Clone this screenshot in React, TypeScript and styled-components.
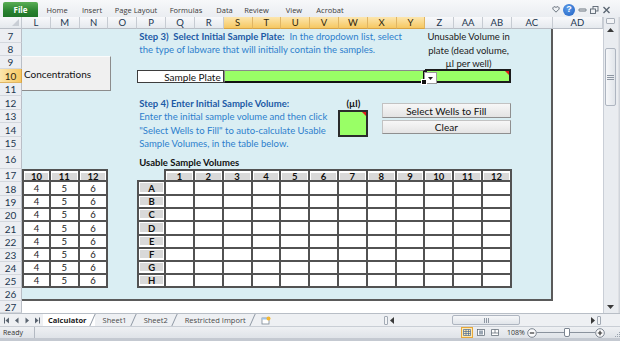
/* eslint-disable */
import React from 'react'
import styled, { createGlobalStyle } from 'styled-components'

const GlobalStyle = createGlobalStyle`
  html, body { margin: 0; padding: 0; }
  body { background: #fff; font-family: 'Lato', 'Liberation Sans', sans-serif; }
`

// spreadsheet geometry
const COLS = ['L', 'M', 'N', 'O', 'P', 'Q', 'R', 'S', 'T', 'U', 'V', 'W', 'X', 'Y', 'Z', 'AA', 'AB', 'AC', 'AD']
const HILITE_COLS = ['S', 'T', 'U', 'V', 'W', 'X', 'Y']
const ROWS: [number, number][] = [
  [7, 14], [8, 13], [9, 13], [10, 14], [11, 13], [12, 14], [13, 13], [14, 14], [15, 13], [16, 19],
  [17, 13], [18, 14], [19, 13], [20, 13], [21, 14], [22, 13], [23, 13], [24, 13], [25, 13], [26, 13], [27, 12],
]
const col = (c: string) => COLS.indexOf(c) + 2
const row = (r: number) => r - 5

const RIBBON_TABS: [string, number][] = [
  ['Home', 38], ['Insert', 32], ['Page Layout', 56], ['Formulas', 44],
  ['Data', 33], ['Review', 31], ['View', 44], ['Acrobat', 28],
]
const WELL_ROWS = ['A', 'B', 'C', 'D', 'E', 'F', 'G', 'H']
const WELL_COLS = Array.from({ length: 12 }, (_, i) => String(i + 1))

const Window = styled.div`
  width: 620px;
  height: 341px;
  overflow: hidden;
  display: flex;
  flex-direction: column;
  background: #d3d8df;
`

/* ---------- ribbon ---------- */
const Ribbon = styled.div`
  height: 17px;
  display: flex;
  align-items: flex-end;
  background: linear-gradient(#f7f8fa, #eaedf1);
  font-family: 'Open Sans', 'Liberation Sans', sans-serif;
`

const FileTab = styled.div`
  margin-left: 3px;
  width: 35px;
  height: 15px;
  display: flex;
  align-items: center;
  justify-content: center;
  border-radius: 2px 2px 0 0;
  background: linear-gradient(#5aae55, #2a8230 60%, #1f7428);
  color: #fff;
  font-size: 8px;
  font-weight: 700;
`

const RibbonTab = styled.div<{ $w: number }>`
  width: ${p => p.$w}px;
  height: 15px;
  display: flex;
  align-items: center;
  justify-content: center;
  font-size: 7.5px;
  color: #3b3b3b;
  white-space: nowrap;
`

const WindowIcons = styled.div`
  margin-left: auto;
  margin-right: 9px;
  height: 15px;
  display: flex;
  align-items: center;
  gap: 3px;
`

const HelpIcon = styled.div`
  width: 12px;
  height: 12px;
  border-radius: 50%;
  background: radial-gradient(circle at 40% 35%, #5b9ae8, #1d5fc2);
  color: #fff;
  font-size: 9px;
  font-weight: 700;
  display: flex;
  align-items: center;
  justify-content: center;
  line-height: 1;
  font-family: 'Liberation Sans', sans-serif;
`

/* ---------- sheet ---------- */
const Main = styled.div`
  display: flex;
  height: 296px;
`

const Sheet = styled.div`
  width: 603px;
  display: grid;
  grid-template-columns: 22px repeat(17, 28.8235px) 41px 50px;
  grid-template-rows: 12px ${ROWS.map(([, h]) => h + 'px').join(' ')};
  background: #fff;
  overflow: hidden;
`

const Corner = styled.div`
  grid-column: 1;
  grid-row: 1;
  position: relative;
  background: linear-gradient(#f7f8fa, #e4e8ed);
  border-right: 1px solid #c3c8cf;
  border-bottom: 1px solid #b9bec6;
  &::after {
    content: '';
    position: absolute;
    right: 2px;
    bottom: 2px;
    border-bottom: 7px solid #c9ced5;
    border-left: 7px solid transparent;
  }
`

const ColHeader = styled.div<{ $sel?: boolean }>`
  grid-row: 1;
  display: flex;
  align-items: center;
  justify-content: center;
  font-size: 9.5px;
  color: ${p => (p.$sel ? '#30260c' : '#22364f')};
  border-right: 1px solid ${p => (p.$sel ? '#e0b563' : '#c6cbd2')};
  border-bottom: 1px solid ${p => (p.$sel ? '#d9a446' : '#b9bec6')};
  background: ${p => (p.$sel ? 'linear-gradient(#fce6ae, #f6c862)' : 'linear-gradient(#f8f9fb, #e5e9ee)')};
`

const RowHeader = styled.div<{ $r: number; $sel?: boolean }>`
  grid-column: 1;
  grid-row: ${p => row(p.$r)};
  display: flex;
  align-items: center;
  justify-content: center;
  font-size: 10px;
  color: ${p => (p.$sel ? '#30260c' : '#22364f')};
  border-right: 1px solid ${p => (p.$sel ? '#d9a446' : '#b9bec6')};
  border-bottom: 1px solid ${p => (p.$sel ? '#e0b563' : '#d3d7dd')};
  background: ${p => (p.$sel ? 'linear-gradient(90deg, #fce6ae, #f6c862)' : '#eceef2')};
`

const BlueFill = styled.div`
  grid-column: ${col('L')} / ${col('AD')};
  grid-row: ${row(7)} / ${row(27)};
  background: #daeef3;
  border-right: 2px solid #5a5a5a;
  border-bottom: 2px solid #5a5a5a;
`

const Instruction = styled.div<{ $r: number }>`
  grid-column: ${col('P')} / ${col('Z')};
  grid-row: ${p => row(p.$r)};
  padding-left: 2px;
  display: flex;
  align-items: center;
  white-space: nowrap;
  font-size: 9.5px;
  color: #2d7fcd;
  b {
    color: #1c5aa6;
    font-weight: 700;
  }
`

const DeadVolumeNote = styled.div`
  grid-column: ${col('Z')} / ${col('AC')};
  grid-row: ${row(7)} / ${row(10)};
  padding-top: 1px;
  text-align: center;
  font-size: 9.5px;
  line-height: 13.5px;
  color: #1a1a1a;
`

const ConcButton = styled.div`
  grid-column: ${col('L')} / ${col('P')};
  grid-row: ${row(9)} / ${row(12)};
  align-self: start;
  width: 89px;
  height: 35px;
  box-sizing: border-box;
  display: flex;
  align-items: center;
  padding-left: 2px;
  background: #f0f0f0;
  border-right: 1px solid #8c8c8c;
  border-bottom: 1px solid #8c8c8c;
  border-top: 1px solid #fbfbfb;
  font-size: 10px;
  color: #111;
`

const PlateLabel = styled.div`
  grid-column: ${col('P')} / ${col('S')};
  grid-row: ${row(10)};
  margin-top: 1px;
  box-sizing: border-box;
  background: #fff;
  border: 1px solid #3d3d3d;
  display: flex;
  align-items: center;
  justify-content: flex-end;
  padding-right: 2px;
  font-size: 10px;
  color: #111;
`

const PlateSelect = styled.div`
  grid-column: ${col('S')} / ${col('Z')};
  grid-row: ${row(10)};
  position: relative;
  margin-top: 1px;
  background: #99ff66;
  border: 1px solid #8a8a8a;
  border-right: 2px solid #111;
  border-bottom: 2px solid #111;
  &::after {
    content: '';
    position: absolute;
    right: -4px;
    bottom: -4px;
    width: 4px;
    height: 4px;
    background: #111;
    border: 1px solid #fff;
    z-index: 2;
  }
`

const DropArrow = styled.div`
  position: absolute;
  right: -14px;
  top: 1px;
  width: 11px;
  height: 10px;
  background: #fff;
  border: 1px solid #9a9a9a;
  display: flex;
  align-items: center;
  justify-content: center;
  z-index: 1;
`

const DeadVolumeInput = styled.div`
  grid-column: ${col('Z')} / ${col('AC')};
  grid-row: ${row(10)};
  position: relative;
  margin-right: 1px;
  background: #99ff66;
  border: 2px solid #1b1b1b;
  &::after {
    content: '';
    position: absolute;
    top: 0;
    right: 0;
    border-top: 4px solid #e21b1b;
    border-left: 4px solid transparent;
  }
`

const UlLabel = styled.div`
  grid-column: ${col('W')};
  grid-row: ${row(12)};
  display: flex;
  align-items: center;
  justify-content: center;
  font-size: 9.5px;
  font-weight: 700;
  color: #111;
`

const VolumeInput = styled.div`
  grid-column: ${col('W')};
  grid-row: ${row(13)} / ${row(15)};
  position: relative;
  background: #99ff66;
  border: 2px solid #2b2b2b;
  margin: 0 0 0 -1px;
  &::after {
    content: '';
    position: absolute;
    top: 0;
    right: 0;
    border-top: 4px solid #e21b1b;
    border-left: 4px solid transparent;
  }
`

const ButtonStack = styled.div`
  grid-column: ${col('X')} / ${col('AC')};
  grid-row: ${row(12)} / ${row(15)};
  display: flex;
  flex-direction: column;
  align-items: flex-end;
  gap: 2px;
  padding: 7px 1px 0 0;
`

const FormButton = styled.div<{ $h: number }>`
  width: 129px;
  height: ${p => p.$h}px;
  box-sizing: border-box;
  display: flex;
  align-items: center;
  justify-content: center;
  background: linear-gradient(#f7f7f7, #e4e4e4);
  border: 1px solid #c2c2c2;
  border-right-color: #8f8f8f;
  border-bottom-color: #8f8f8f;
  font-size: 10px;
  color: #111;
`

const TableTitle = styled.div`
  grid-column: ${col('P')} / ${col('V')};
  grid-row: ${row(16)};
  padding-left: 2px;
  display: flex;
  align-items: flex-end;
  white-space: nowrap;
  font-size: 9.5px;
  font-weight: 700;
  line-height: 13px;
  color: #111;
`

const LeftTable = styled.div`
  grid-column: ${col('L')} / ${col('O')};
  grid-row: ${row(17)} / ${row(26)};
  display: grid;
  grid-template-columns: subgrid;
  grid-template-rows: subgrid;
  & > :nth-child(-n + 3) {
    border-top: 2px solid #525252;
  }
  & > :nth-child(3n + 1) {
    border-left: 2px solid #525252;
  }
`

const WellTable = styled.div`
  grid-column: ${col('P')} / ${col('AC')};
  grid-row: ${row(17)} / ${row(26)};
  display: grid;
  grid-template-columns: subgrid;
  grid-template-rows: subgrid;
  & > :nth-child(-n + 13) {
    border-top: 2px solid #525252;
  }
  & > :nth-child(13n + 1) {
    border-left: 2px solid #525252;
  }
  & > :first-child {
    border-top: none;
    border-left: none;
    background: transparent;
  }
`

const Cell = styled.div`
  display: flex;
  align-items: center;
  justify-content: center;
  background: #fff;
  border-right: 2px solid #525252;
  border-bottom: 2px solid #525252;
  font-size: 9.5px;
  color: #1a1a1a;
`

const HeadCell = styled(Cell)`
  background: #d9d9d9;
  box-shadow: inset 0 2px 0 #fff, inset 1px 0 0 #fff, inset -1px 0 0 #fff;
  font-weight: 700;
  color: #111;
  padding-top: 1px;
`

const LabelCell = styled(Cell)`
  background: #d9d9d9;
  box-shadow: inset 0 0 0 1px #fff, inset 0 -2px 0 #fff;
  font-weight: 700;
  color: #111;
`

/* ---------- scrollbars ---------- */
const VScroll = styled.div`
  width: 14px;
  display: flex;
  flex-direction: column;
  background: #e9ecf0;
  border-left: 1px solid #c9ced6;
  box-sizing: border-box;
`

const SplitBox = styled.div`
  height: 4px;
  margin: 1px 2px 0;
  border: 1px solid #a9b0ba;
  border-radius: 1px;
  background: #f3f4f6;
`

const ScrollArrow = styled.div`
  height: 12px;
  display: flex;
  align-items: center;
  justify-content: center;
`

const Track = styled.div`
  flex: 1;
`

const VThumb = styled.div`
  margin: 12px 1px 0;
  height: 56px;
  border: 1px solid #aeb5c0;
  border-radius: 2px;
  background: linear-gradient(90deg, #f6f7f9, #e1e5ea);
  display: flex;
  align-items: center;
  justify-content: center;
`

const FrameEdge = styled.div`
  flex: 1;
  background: linear-gradient(90deg, #f1f2f4, #c9ced5);
`

/* ---------- sheet tabs row ---------- */
const TabsRow = styled.div`
  height: 13px;
  display: flex;
  align-items: stretch;
  background: #eef0f3;
  border-top: 1px solid #b8bec6;
  box-sizing: border-box;
  font-family: 'Open Sans', 'Liberation Sans', sans-serif;
`

const TabNav = styled.div`
  width: 40px;
  padding-left: 3px;
  display: flex;
  align-items: center;
  gap: 2px;
`

const SheetTab = styled.div<{ $active?: boolean }>`
  position: relative;
  padding: 0 ${p => (p.$active ? 8 : 9)}px 0 ${p => (p.$active ? 5 : 8)}px;
  display: flex;
  align-items: center;
  font-size: 7.5px;
  font-weight: ${p => (p.$active ? 700 : 400)};
  color: ${p => (p.$active ? '#1a1a1a' : '#4a4a4a')};
  background: ${p => (p.$active ? '#fff' : 'transparent')};
  white-space: nowrap;
  &::after {
    content: '';
    position: absolute;
    right: 2px;
    top: 0;
    bottom: 0;
    width: 1px;
    background: #8f98a4;
    transform: skewX(-24deg);
  }
`

const NewSheet = styled.div`
  width: 22px;
  display: flex;
  align-items: center;
  justify-content: center;
`

const HScroll = styled.div`
  margin-left: auto;
  width: 236px;
  display: flex;
  align-items: center;
  gap: 2px;
`

const HThumb = styled.div`
  margin-left: 56px;
  width: 66px;
  height: 8px;
  border: 1px solid #aeb5c0;
  border-radius: 2px;
  background: linear-gradient(#f6f7f9, #e1e5ea);
  display: flex;
  align-items: center;
  justify-content: center;
`

const HTrack = styled.div`
  flex: 1;
  display: flex;
  align-items: center;
`

const ScrollEnd = styled.div`
  width: 17px;
`

/* ---------- status bar ---------- */
const StatusBar = styled.div`
  height: 12px;
  display: flex;
  align-items: center;
  background: linear-gradient(#eef0f3, #dfe3e8);
  border-top: 1px solid #c9ced5;
  box-sizing: border-box;
  font-family: 'Open Sans', 'Liberation Sans', sans-serif;
  font-size: 7px;
  color: #333;
`

const ReadyBox = styled.div`
  width: 31px;
  height: 100%;
  padding-left: 3px;
  display: flex;
  align-items: center;
  border-right: 1px solid #b3b9c2;
`

const ViewButtons = styled.div`
  margin-left: auto;
  display: flex;
  align-items: center;
  gap: 2px;
`

const ViewButton = styled.div<{ $on?: boolean }>`
  width: 10px;
  height: 9px;
  display: flex;
  align-items: center;
  justify-content: center;
  border: 1px solid ${p => (p.$on ? '#e7a83a' : 'transparent')};
  background: ${p => (p.$on ? '#fde9b4' : 'transparent')};
`

const ZoomPct = styled.div`
  margin-left: 6px;
  width: 20px;
`

const ZoomSlider = styled.div`
  display: flex;
  align-items: center;
  margin-right: 3px;
`

const SliderTrack = styled.div`
  position: relative;
  width: 58px;
  height: 1px;
  background: #8a929d;
`

const SliderThumb = styled.div`
  position: absolute;
  left: 27px;
  top: -4px;
  width: 4px;
  height: 7px;
  background: #fff;
  border: 1px solid #7c8591;
  border-radius: 1px 1px 2px 2px;
`

const Grip = styled.div`
  width: 12px;
  height: 100%;
  display: flex;
  align-items: flex-end;
  justify-content: flex-end;
`

const BottomFrame = styled.div`
  height: 3px;
  background: #c4c9d1;
`

/* ---------- small drawn icons ---------- */
const Tri = ({ dir }: { dir: 'up' | 'down' | 'left' | 'right' }) => {
  const pts = {
    up: '0,4 3.5,0 7,4',
    down: '0,0 3.5,4 7,0',
    left: '4,0 0,3.5 4,7',
    right: '0,0 4,3.5 0,7',
  }[dir]
  const vertical = dir === 'up' || dir === 'down'
  return (
    <svg width={vertical ? 7 : 4} height={vertical ? 4 : 7} viewBox={vertical ? '0 0 7 4' : '0 0 4 7'}>
      <polygon points={pts} fill="#3a3a3a" />
    </svg>
  )
}

const NavIcon = ({ kind }: { kind: 'first' | 'prev' | 'next' | 'last' }) => (
  <svg width="8" height="7" viewBox="0 0 8 7">
    {kind === 'first' && <><rect x="1" y="0.5" width="1" height="6" fill="#5a6470" /><polygon points="6,0.5 2.5,3.5 6,6.5" fill="#5a6470" /></>}
    {kind === 'prev' && <polygon points="5.5,0.5 2,3.5 5.5,6.5" fill="#5a6470" />}
    {kind === 'next' && <polygon points="2.5,0.5 6,3.5 2.5,6.5" fill="#5a6470" />}
    {kind === 'last' && <><polygon points="2,0.5 5.5,3.5 2,6.5" fill="#5a6470" /><rect x="6" y="0.5" width="1" height="6" fill="#5a6470" /></>}
  </svg>
)

function GripLines({ vertical }: { vertical?: boolean }) {
  return vertical ? (
    <svg width="7" height="5" viewBox="0 0 7 5">
      <path d="M0 0.5H7M0 2.5H7M0 4.5H7" stroke="#8d96a2" strokeWidth="1" />
    </svg>
  ) : (
    <svg width="5" height="5" viewBox="0 0 5 5">
      <path d="M0.5 0V5M2.5 0V5M4.5 0V5" stroke="#8d96a2" strokeWidth="1" />
    </svg>
  )
}

function CircleBtn({ plus }: { plus?: boolean }) {
  return (
    <svg width="10" height="10" viewBox="0 0 10 10">
      <circle cx="5" cy="5" r="4.3" fill="#fbfbfc" stroke="#6f7884" strokeWidth="0.9" />
      <path d={plus ? 'M2.8 5H7.2M5 2.8V7.2' : 'M2.8 5H7.2'} stroke="#333" strokeWidth="1.2" />
    </svg>
  )
}

export default function App() {
  return (
    <>
      <GlobalStyle />
      <Window>
        <Ribbon>
          <FileTab>File</FileTab>
          {RIBBON_TABS.map(([label, w]) => (
            <RibbonTab key={label} $w={w}>{label}</RibbonTab>
          ))}
          <WindowIcons>
            <svg width="8" height="7" viewBox="0 0 8 7">
              <path d="M4 6.2 L1 3.2 A1.5 1.5 0 0 1 4 1.6 A1.5 1.5 0 0 1 7 3.2 Z" fill="none" stroke="#5b6672" strokeWidth="0.9" />
            </svg>
            <HelpIcon>?</HelpIcon>
            <svg width="9" height="8" viewBox="0 0 9 8">
              <rect x="1" y="3" width="7" height="2" rx="0.5" fill="none" stroke="#5b6672" strokeWidth="0.9" />
            </svg>
            <svg width="9" height="8" viewBox="0 0 9 8">
              <rect x="3" y="0.5" width="5" height="4.5" fill="none" stroke="#5b6672" strokeWidth="0.9" />
              <rect x="0.5" y="3" width="5" height="4.5" fill="#eef0f3" stroke="#5b6672" strokeWidth="0.9" />
            </svg>
            <svg width="9" height="8" viewBox="0 0 9 8">
              <path d="M1.5 1 L7.5 7 M7.5 1 L1.5 7" stroke="#5b6672" strokeWidth="1.4" />
            </svg>
          </WindowIcons>
        </Ribbon>

        <Main>
          <Sheet>
            <Corner />
            {COLS.map(c => (
              <ColHeader key={c} $sel={HILITE_COLS.includes(c)}>{c}</ColHeader>
            ))}
            {ROWS.map(([r]) => (
              <RowHeader key={r} $r={r} $sel={r === 10}>{r}</RowHeader>
            ))}

            <BlueFill />

            <Instruction $r={7}>
              <b>Step 3)&nbsp; Select Initial Sample Plate:</b>&nbsp; In the dropdown list, select
            </Instruction>
            <Instruction $r={8}>the type of labware that will initially contain the samples.</Instruction>

            <DeadVolumeNote>
              Unusable Volume in<br />
              plate (dead volume,<br />
              µl per well)
            </DeadVolumeNote>

            <ConcButton>Concentrations</ConcButton>

            <PlateLabel>Sample Plate</PlateLabel>
            <DeadVolumeInput />
            <PlateSelect>
              <DropArrow>
                <svg width="5" height="3" viewBox="0 0 5 3"><polygon points="0,0 5,0 2.5,3" fill="#222" /></svg>
              </DropArrow>
            </PlateSelect>

            <Instruction $r={12}><b>Step 4) Enter Initial Sample Volume:</b></Instruction>
            <Instruction $r={13}>Enter the initial sample volume and then click</Instruction>
            <Instruction $r={14}>"Select Wells to Fill" to auto-calculate Usable</Instruction>
            <Instruction $r={15}>Sample Volumes, in the table below.</Instruction>

            <UlLabel>(µl)</UlLabel>
            <VolumeInput />

            <ButtonStack>
              <FormButton $h={15}>Select Wells to Fill</FormButton>
              <FormButton $h={14}>Clear</FormButton>
            </ButtonStack>

            <TableTitle>Usable Sample Volumes</TableTitle>

            <LeftTable>
              {['10', '11', '12'].map(h => <HeadCell key={h}>{h}</HeadCell>)}
              {WELL_ROWS.map(r => (
                <React.Fragment key={r}>
                  <Cell>4</Cell>
                  <Cell>5</Cell>
                  <Cell>6</Cell>
                </React.Fragment>
              ))}
            </LeftTable>

            <WellTable>
              <Cell />
              {WELL_COLS.map(h => <HeadCell key={h}>{h}</HeadCell>)}
              {WELL_ROWS.map(r => (
                <React.Fragment key={r}>
                  <LabelCell>{r}</LabelCell>
                  {WELL_COLS.map(c => <Cell key={c} />)}
                </React.Fragment>
              ))}
            </WellTable>
          </Sheet>

          <VScroll>
            <SplitBox />
            <ScrollArrow><Tri dir="up" /></ScrollArrow>
            <Track>
              <VThumb><GripLines vertical /></VThumb>
            </Track>
            <ScrollArrow><Tri dir="down" /></ScrollArrow>
          </VScroll>
          <FrameEdge />
        </Main>

        <TabsRow>
          <TabNav>
            <NavIcon kind="first" />
            <NavIcon kind="prev" />
            <NavIcon kind="next" />
            <NavIcon kind="last" />
          </TabNav>
          <SheetTab $active>Calculator</SheetTab>
          <SheetTab>Sheet1</SheetTab>
          <SheetTab>Sheet2</SheetTab>
          <SheetTab>Restricted Import</SheetTab>
          <NewSheet>
            <svg width="10" height="9" viewBox="0 0 10 9">
              <rect x="1" y="2" width="7" height="6" fill="#fff" stroke="#7a8794" strokeWidth="0.8" />
              <rect x="1" y="2" width="7" height="1.5" fill="#9fc3e6" />
              <circle cx="7.5" cy="2.5" r="2" fill="#f2b632" />
            </svg>
          </NewSheet>
          <HScroll>
            <svg width="4" height="9" viewBox="0 0 4 9">
              <rect x="0.5" y="0.5" width="3" height="8" rx="0.5" fill="#f3f4f6" stroke="#8f98a4" strokeWidth="0.8" />
            </svg>
            <Tri dir="left" />
            <HTrack>
              <HThumb><GripLines /></HThumb>
            </HTrack>
            <Tri dir="right" />
            <svg width="4" height="9" viewBox="0 0 4 9">
              <rect x="0.5" y="0.5" width="3" height="8" rx="0.5" fill="#f3f4f6" stroke="#8f98a4" strokeWidth="0.8" />
            </svg>
            <ScrollEnd />
          </HScroll>
        </TabsRow>

        <StatusBar>
          <ReadyBox>Ready</ReadyBox>
          <ViewButtons>
            <ViewButton $on>
              <svg width="8" height="7" viewBox="0 0 8 7">
                <path d="M0.5 0.5H7.5V6.5H0.5Z M0.5 2.5H7.5 M0.5 4.5H7.5 M3 0.5V6.5 M5.5 0.5V6.5" fill="none" stroke="#4b6a91" strokeWidth="0.7" />
              </svg>
            </ViewButton>
            <ViewButton>
              <svg width="8" height="7" viewBox="0 0 8 7">
                <rect x="0.5" y="0.5" width="7" height="6" fill="#fff" stroke="#55606c" strokeWidth="0.7" />
                <rect x="2" y="1.5" width="4" height="4" fill="#9aa6b3" />
              </svg>
            </ViewButton>
            <ViewButton>
              <svg width="8" height="7" viewBox="0 0 8 7">
                <path d="M0.5 0.5H7.5V6.5H0.5Z M4 0.5V4 M0.5 4H7.5" fill="#fff" stroke="#55606c" strokeWidth="0.7" />
              </svg>
            </ViewButton>
          </ViewButtons>
          <ZoomPct>108%</ZoomPct>
          <ZoomSlider>
            <CircleBtn />
            <SliderTrack><SliderThumb /></SliderTrack>
            <CircleBtn plus />
          </ZoomSlider>
          <Grip>
            <svg width="8" height="8" viewBox="0 0 8 8">
              <path d="M7 2h1v1H7zM5 4h1v1H5zM7 4h1v1H7zM3 6h1v1H3zM5 6h1v1H5zM7 6h1v1H7z" fill="#9aa3ae" />
            </svg>
          </Grip>
        </StatusBar>
        <BottomFrame />
      </Window>
    </>
  )
}
